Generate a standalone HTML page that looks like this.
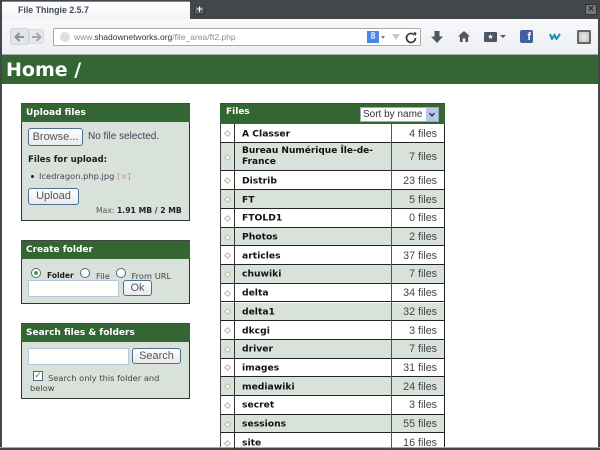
<!DOCTYPE html>
<html><head><meta charset="utf-8"><style>
html{background:#fff}
html,body{margin:0;padding:0;width:600px;height:450px;overflow:hidden}
body{position:relative;font-family:"DejaVu Sans","Liberation Sans",sans-serif;color:#1c1c1c;background:#fff;filter:blur(.3px)}
div,span.a{position:absolute;box-sizing:border-box;white-space:nowrap}
.s{font-family:"Liberation Sans",sans-serif}
.box{left:21px;width:169px;background:#d8e2da;border:1px solid #333}
.hd{left:21px;width:169px;background:#336633;color:#fff;font-weight:bold;font-size:9px;padding-left:5px;border-top:1px solid #444}
.btn{background:linear-gradient(#fff,#e9e9ee);border:1px solid #4f6f8f;border-radius:3px;font-family:"Liberation Sans",sans-serif;font-size:11px;color:#555;text-align:center}
.in{background:#fff;border:1px solid #b5c7d8}
.r{left:0;width:224px;border-bottom:1px solid #222}
.n{left:21px;font-weight:bold;font-size:9.200px;top:calc(50% + .5px);transform:translateY(-50%);color:#111}
.c{right:8px;font-family:"Liberation Sans",sans-serif;font-size:10.700px;top:calc(50% + .5px);transform:translateY(-50%);color:#444}
.d{left:3.500px;top:50%;margin-top:-2px;width:5px;height:5px;transform:rotate(45deg);border:1px solid #b8b498;background:#fff}
.radio{width:10px;height:10px;border:1px solid #4a6a85;border-radius:50%;background:#fff}
.t{font-size:8.300px;color:#444}
</style></head><body>
<!-- chrome -->
<div style="left:0;top:0;width:600px;height:55px;background:#43464b"></div>
<div style="left:2px;top:1px;width:188px;height:19px;background:linear-gradient(#fff,#f1f2f5);border-top:1px solid #2aa3d0"></div>
<div class="s" style="left:18px;top:5px;font-size:8.800px;font-weight:bold;color:#444b55">File Thingie 2.5.7</div>
<div style="left:2px;top:19px;width:596px;height:36px;background:linear-gradient(#f8f8fa,#eeeff3);border-bottom:1px solid #a8a8a8"></div>
<div style="left:194px;top:5px;width:11px;height:10px;background:#55585d;border-radius:2px;border:1px solid #333;color:#fff;font-size:9px;line-height:8px;text-align:center;font-weight:bold">+</div>
<div style="left:585px;top:4px;width:12px;height:11px;background:#777;border:1px solid #333;color:#222;font-size:9px;line-height:9px;text-align:center;font-weight:bold">×</div>
<!-- nav -->
<div style="left:10px;top:28px;width:19px;height:17px;background:#e1e4e8;border:1px solid #d0d3d8;border-radius:3px"></div>
<div style="left:29px;top:29px;width:15px;height:15px;background:#e6e8ec;border:1px solid #d5d8dc;border-radius:0 3px 3px 0"></div>
<svg style="position:absolute;left:14px;top:32px" width="11" height="10" viewBox="0 0 11 10"><path d="M10 5H2M5.500 1L1.500 5l4 4" fill="none" stroke="#8d9299" stroke-width="2"/></svg>
<svg style="position:absolute;left:32px;top:32px" width="10" height="10" viewBox="0 0 10 10"><path d="M0 5h8M4.500 1l4 4-4 4" fill="none" stroke="#a2a6ab" stroke-width="2"/></svg>
<!-- url -->
<div style="left:53px;top:28px;width:368px;height:18px;background:#fff;border:1px solid #aaa;border-radius:2px"></div>
<div style="left:60px;top:32px;width:10px;height:10px;border-radius:50%;background:#dde0e3"></div>
<div class="s" style="left:74px;top:32px;font-size:8.500px;color:#8a8d92">www.<span style="color:#333">shadownetworks.org</span>/file_area/ft2.php</div>
<div style="left:367px;top:31px;width:12px;height:12px;background:#4a86e8;color:#dfe9fb;font:bold 10px 'Liberation Serif',serif;line-height:12px;text-align:center">8</div>
<div style="left:381px;top:36px;border:2.500px solid transparent;border-top:3px solid #777;width:0;height:0"></div>
<div style="left:392px;top:34px;border:4px solid transparent;border-top:6px solid #c8c8cc;width:0;height:0"></div>
<svg style="position:absolute;left:404px;top:31px" width="14" height="14" viewBox="0 0 14 14"><path d="M11.500 7a4.500 4.500 0 1 1-1.400-3.300" fill="none" stroke="#333" stroke-width="1.600"/><path d="M2.500 7a4.500 4.500 0 0 1 .2-1.300" fill="none" stroke="#333" stroke-width="1.600"/><path d="M8.500 1l3.500 0 0 3.500z" fill="#333" transform="rotate(30 10 3)"/></svg>
<!-- toolbar icons -->
<svg style="position:absolute;left:430px;top:31px" width="14" height="12" viewBox="0 0 14 12"><path d="M4.500 0h5v5.500h3.500L7 12 1 5.500h3.500z" fill="#4c5763"/></svg>
<svg style="position:absolute;left:458px;top:31px" width="12" height="11" viewBox="0 0 13 12"><path d="M6.500 0L13 6h-2v6H8V8H5v4H2V6H0z" fill="#4c5763"/></svg>
<div style="left:484px;top:32px;width:13px;height:10px;background:#4c5763;border-radius:1px;color:#fff;font-size:7px;line-height:10px;text-align:center">★</div>
<div style="left:500px;top:35px;border:3px solid transparent;border-top:3px solid #4c5763;width:0;height:0"></div>
<div style="left:520px;top:30px;width:13px;height:13px;background:#3f5f9f;border-radius:2px;color:#fff;font:bold 11px 'Liberation Sans',sans-serif;line-height:14px;text-align:right;padding-right:2px">f</div>
<svg style="position:absolute;left:549px;top:33px" width="13" height="7" viewBox="0 0 13 7"><path d="M1 1l2 5 2.500-4 2 4 3.500-5" fill="none" stroke="#1590b0" stroke-width="2"/></svg>
<div style="left:577px;top:30px;width:14px;height:14px;background:radial-gradient(#eee,#bbb);border:2px solid #666;border-radius:1px"></div>
<!-- window sides -->
<div style="left:0;top:55px;width:2px;height:395px;background:#43464b"></div>
<div style="left:598px;top:55px;width:2px;height:395px;background:#43464b"></div>
<!-- page header -->
<div style="left:2px;top:55px;width:596px;height:29px;background:#336633"></div>
<div style="left:6px;top:58px;font-weight:bold;font-size:19px;color:#fff;line-height:24px">Home /</div>
<!-- Upload -->
<div class="box" style="top:103px;height:118px"></div>
<div class="hd" style="top:103px;height:19px;line-height:18px">Upload files</div>
<div class="btn" style="left:28px;top:128px;width:55px;height:18px;line-height:16px">Browse...</div>
<div class="s" style="left:88px;top:131px;font-size:10px;color:#4a3a55">No file selected.</div>
<div style="left:28px;top:155px;font-weight:bold;font-size:8.600px">Files for upload:</div>
<div style="left:31px;top:175px;width:3px;height:3px;border-radius:50%;background:#222"></div>
<div style="left:39px;top:171px;font-size:8.300px;color:#445">Icedragon.php.jpg <span style="color:#c88">[×]</span></div>
<div class="btn" style="left:28px;top:188px;width:51px;height:17px;line-height:15px">Upload</div>
<div style="left:96px;top:206px;font-size:7.700px;color:#555">Max: <b style="color:#222">1.91 MB / 2 MB</b></div>
<!-- Create -->
<div class="box" style="top:240px;height:64px"></div>
<div class="hd" style="top:240px;height:19px;line-height:19px">Create folder</div>
<div class="radio" style="left:31px;top:268px"></div><div style="left:34px;top:271px;width:4px;height:4px;background:#4a9a4a;border-radius:50%"></div>
<div style="left:47px;top:271px;font-size:7.500px;font-weight:bold">Folder</div>
<div class="radio" style="left:80px;top:268px"></div>
<div class="t" style="left:96px;top:270.500px">File</div>
<div class="radio" style="left:116px;top:268px"></div>
<div class="t" style="left:131.500px;top:270.500px">From URL</div>
<div class="in" style="left:28px;top:280px;width:91px;height:17px"></div>
<div class="btn" style="left:123px;top:280px;width:29px;height:16px;line-height:15px">Ok</div>
<!-- Search -->
<div class="box" style="top:323px;height:76px"></div>
<div class="hd" style="top:323px;height:19px;line-height:19px">Search files &amp; folders</div>
<div class="in" style="left:28px;top:348px;width:101px;height:17px"></div>
<div class="btn" style="left:132px;top:348px;width:49px;height:16px;line-height:15px">Search</div>
<div style="left:33px;top:371px;width:10px;height:10px;background:#fff;border:1px solid #4a6a85;color:#3a9a3a;font-size:9px;line-height:8px;text-align:center;font-weight:bold">✓</div>
<div class="t" style="left:48px;top:373px">Search only this folder and</div>
<div class="t" style="left:30px;top:383px">below</div>
<!-- Files -->
<div style="left:220px;top:103px;width:225px;height:21px;background:#336633;border-top:1px solid #444"></div>
<div style="left:226px;top:107px;color:#fff;font-weight:bold;font-size:9px">Files</div>
<div style="left:360px;top:107px;width:79px;height:15px;background:#fff;border:1px solid #9ab"></div>
<div class="s" style="left:363px;top:108.500px;font-size:10px;color:#333">Sort by name</div>
<svg style="position:absolute;left:426px;top:108px" width="12" height="13" viewBox="0 0 12 13"><rect width="12" height="13" fill="#b9c8e6"/><path d="M3.500 5l2.500 3 2.500-3" fill="none" stroke="#335" stroke-width="1.400"/></svg>
<div style="left:220px;top:124px;width:225px;height:326px;overflow:hidden;border-left:1px solid #444;border-right:1px solid #222">
<div style="left:13px;top:0;width:1px;height:326px;background:#333;z-index:2"></div>
<div style="left:170px;top:0;width:1px;height:326px;background:#555;z-index:2"></div>
<div class="r" style="top:0;height:19px;background:#fff"><div class="d"></div><div class="n">A Classer</div><div class="c">4 files</div></div>
<div class="r" style="top:19px;height:28px;background:#d8e2da"><div class="d"></div><div class="n" style="line-height:11px;font-size:9px">Bureau Numérique Île-de-<br>France</div><div class="c">7 files</div></div>
<div class="r" style="top:47px;height:19px;background:#fff"><div class="d"></div><div class="n">Distrib</div><div class="c">23 files</div></div>
<div class="r" style="top:66px;height:19px;background:#d8e2da"><div class="d"></div><div class="n">FT</div><div class="c">5 files</div></div>
<div class="r" style="top:85px;height:18.700px;background:#fff"><div class="d"></div><div class="n">FTOLD1</div><div class="c">0 files</div></div>
<div class="r" style="top:103.700px;height:18.700px;background:#d8e2da"><div class="d"></div><div class="n">Photos</div><div class="c">2 files</div></div>
<div class="r" style="top:122.400px;height:18.700px;background:#fff"><div class="d"></div><div class="n">articles</div><div class="c">37 files</div></div>
<div class="r" style="top:141.100px;height:18.700px;background:#d8e2da"><div class="d"></div><div class="n">chuwiki</div><div class="c">7 files</div></div>
<div class="r" style="top:159.800px;height:18.700px;background:#fff"><div class="d"></div><div class="n">delta</div><div class="c">34 files</div></div>
<div class="r" style="top:178.500px;height:18.700px;background:#d8e2da"><div class="d"></div><div class="n">delta1</div><div class="c">32 files</div></div>
<div class="r" style="top:197.200px;height:18.700px;background:#fff"><div class="d"></div><div class="n">dkcgi</div><div class="c">3 files</div></div>
<div class="r" style="top:215.900px;height:18.700px;background:#d8e2da"><div class="d"></div><div class="n">driver</div><div class="c">7 files</div></div>
<div class="r" style="top:234.600px;height:18.700px;background:#fff"><div class="d"></div><div class="n">images</div><div class="c">31 files</div></div>
<div class="r" style="top:253.300px;height:18.700px;background:#d8e2da"><div class="d"></div><div class="n">mediawiki</div><div class="c">24 files</div></div>
<div class="r" style="top:272px;height:18.700px;background:#fff"><div class="d"></div><div class="n">secret</div><div class="c">3 files</div></div>
<div class="r" style="top:290.700px;height:18.700px;background:#d8e2da"><div class="d"></div><div class="n">sessions</div><div class="c">55 files</div></div>
<div class="r" style="top:309.400px;height:18.700px;background:#fff;border:0"><div class="d"></div><div class="n">site</div><div class="c">16 files</div></div>
</div>
<div style="left:0;top:447px;width:600px;height:3px;background:#43464b;border-top:1px solid #aaa"></div>
</body></html>
